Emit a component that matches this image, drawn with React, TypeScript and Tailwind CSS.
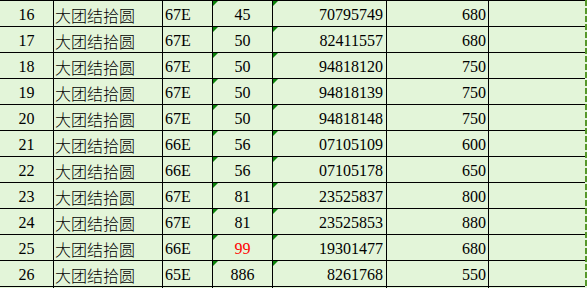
import React from "react";

const rows: [string, string, string, string, string, string][] = [
  ["16", "大团结拾圆", "67E", "45", "70795749", "680"],
  ["17", "大团结拾圆", "67E", "50", "82411557", "680"],
  ["18", "大团结拾圆", "67E", "50", "94818120", "750"],
  ["19", "大团结拾圆", "67E", "50", "94818139", "750"],
  ["20", "大团结拾圆", "67E", "50", "94818148", "750"],
  ["21", "大团结拾圆", "66E", "56", "07105109", "600"],
  ["22", "大团结拾圆", "66E", "56", "07105178", "650"],
  ["23", "大团结拾圆", "67E", "81", "23525837", "800"],
  ["24", "大团结拾圆", "67E", "81", "23525853", "880"],
  ["25", "大团结拾圆", "66E", "99", "19301477", "680"],
  ["26", "大团结拾圆", "65E", "886", "8261768", "550"],
];

function Tri() {
  return (
    <div className="absolute left-0 top-0 h-0 w-0 border-t-[5px] border-r-[5px] border-t-[#0a820a] border-r-transparent" />
  );
}

export default function App() {
  return (
    <div
      className="flex h-[288px] w-[587px] overflow-hidden bg-[#e3f5d9] text-[16px] text-black"
      style={{ fontFamily: "'Liberation Serif', 'Noto Sans CJK SC', serif" }}
    >
      <div className="w-[585px] border-t border-black">
        {rows.map((r) => (
          <div
            key={r[0]}
            className="grid h-[26px] grid-cols-[54px_109px_50px_60px_114px_102px_96px] border-b border-black leading-[27px]"
          >
            <div className="border-r border-black text-center">{r[0]}</div>
            <div className="border-r border-black pl-[1px]" style={{ fontFamily: "'Noto Sans CJK SC', sans-serif" }}>
              <span className="relative top-[1px] font-light">{r[1]}</span>
            </div>
            <div className="border-r border-black pl-[2px]">{r[2]}</div>
            <div className={`relative border-r border-black text-center ${r[3] === "99" ? "text-[#ff0000]" : ""}`}>
              <Tri />
              {r[3]}
            </div>
            <div className="relative border-r border-black pr-[3px] text-right">
              <Tri />
              {r[4]}
            </div>
            <div className="border-r border-black pr-[2px] text-right">{r[5]}</div>
            <div />
          </div>
        ))}
      </div>
      <div className="h-full w-[2px] bg-[repeating-linear-gradient(to_bottom,#56982a_0px,#56982a_6px,transparent_6px,transparent_8px)]" />
    </div>
  );
}
